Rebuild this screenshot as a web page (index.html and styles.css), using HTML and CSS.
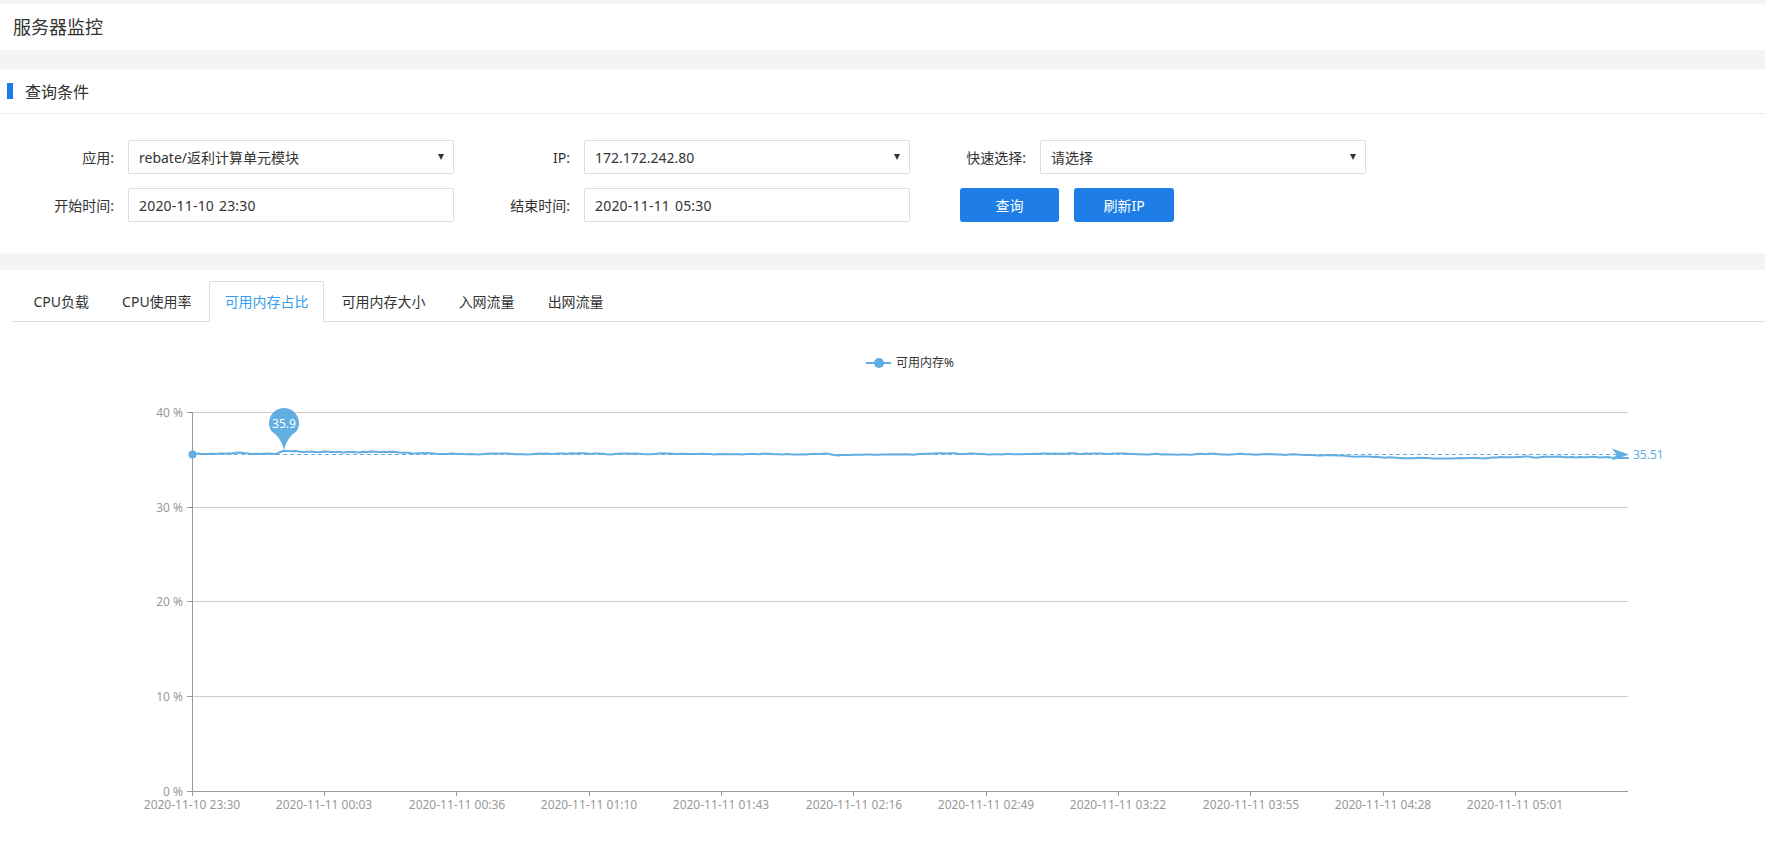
FILE: index.html
```html
<!DOCTYPE html>
<html lang="zh-CN">
<head>
<meta charset="utf-8">
<title>服务器监控</title>
<link rel="stylesheet" href="styles.css">
</head>
<body>
<header class="page-header">服务器监控</header>

<section class="panel query-panel">
  <div class="panel-title"><span class="title-bar"></span><span>查询条件</span></div>
  <div class="form">
    <div class="form-row">
      <div class="field"><label class="field-label">应用:</label><div class="select"><span>rebate/返利计算单元模块</span><i class="caret"></i></div></div>
      <div class="field"><label class="field-label">IP:</label><div class="select"><span>172.172.242.80</span><i class="caret"></i></div></div>
      <div class="field"><label class="field-label">快速选择:</label><div class="select"><span>请选择</span><i class="caret"></i></div></div>
    </div>
    <div class="form-row">
      <div class="field"><label class="field-label">开始时间:</label><div class="input">2020-11-10 23:30</div></div>
      <div class="field"><label class="field-label">结束时间:</label><div class="input">2020-11-11 05:30</div></div>
      <div class="field buttons"><button class="btn btn-query">查询</button><button class="btn btn-refresh">刷新IP</button></div>
    </div>
  </div>
</section>

<section class="panel chart-panel">
  <ul class="tabs">
    <li class="tab">CPU负载</li>
    <li class="tab">CPU使用率</li>
    <li class="tab active">可用内存占比</li>
    <li class="tab">可用内存大小</li>
    <li class="tab">入网流量</li>
    <li class="tab">出网流量</li>
  </ul>
  <svg class="chart" width="1765" height="527" viewBox="0 322 1765 527" xmlns="http://www.w3.org/2000/svg">
    <!-- legend -->
    <line class="legend-line" x1="866" y1="363" x2="891" y2="363"/>
    <circle class="legend-dot" cx="879" cy="363" r="5"/>
    <text class="legend-text" x="896" y="367">可用内存%</text>

    <!-- grid -->
    <line class="grid" x1="192" y1="412.5" x2="1628" y2="412.5"/>
    <line class="grid" x1="192" y1="507.5" x2="1628" y2="507.5"/>
    <line class="grid" x1="192" y1="601.5" x2="1628" y2="601.5"/>
    <line class="grid" x1="192" y1="696.5" x2="1628" y2="696.5"/>

    <!-- y axis -->
    <line class="axis" x1="192.5" y1="412" x2="192.5" y2="791"/>
    <line class="axis" x1="187" y1="412.5" x2="192" y2="412.5"/>
    <line class="axis" x1="187" y1="507.5" x2="192" y2="507.5"/>
    <line class="axis" x1="187" y1="601.5" x2="192" y2="601.5"/>
    <line class="axis" x1="187" y1="696.5" x2="192" y2="696.5"/>
    <line class="axis" x1="187" y1="791.5" x2="192" y2="791.5"/>
    <text class="tick-label y-label" x="183" y="416.5">40 %</text>
    <text class="tick-label y-label" x="183" y="511.5">30 %</text>
    <text class="tick-label y-label" x="183" y="605.5">20 %</text>
    <text class="tick-label y-label" x="183" y="700.5">10 %</text>
    <text class="tick-label y-label" x="183" y="795.5">0 %</text>

    <!-- x axis -->
    <line class="axis" x1="192" y1="791.5" x2="1628" y2="791.5"/>
    <g class="x-ticks">
      <line class="axis" x1="192.5" y1="791" x2="192.5" y2="796"/>
      <line class="axis" x1="324.5" y1="791" x2="324.5" y2="796"/>
      <line class="axis" x1="456.5" y1="791" x2="456.5" y2="796"/>
      <line class="axis" x1="589.5" y1="791" x2="589.5" y2="796"/>
      <line class="axis" x1="721.5" y1="791" x2="721.5" y2="796"/>
      <line class="axis" x1="853.5" y1="791" x2="853.5" y2="796"/>
      <line class="axis" x1="986.5" y1="791" x2="986.5" y2="796"/>
      <line class="axis" x1="1118.5" y1="791" x2="1118.5" y2="796"/>
      <line class="axis" x1="1250.5" y1="791" x2="1250.5" y2="796"/>
      <line class="axis" x1="1383.5" y1="791" x2="1383.5" y2="796"/>
      <line class="axis" x1="1515.5" y1="791" x2="1515.5" y2="796"/>
    </g>
    <text class="tick-label x-label" x="192" y="809">2020-11-10 23:30</text>
    <text class="tick-label x-label" x="324" y="809">2020-11-11 00:03</text>
    <text class="tick-label x-label" x="457" y="809">2020-11-11 00:36</text>
    <text class="tick-label x-label" x="589" y="809">2020-11-11 01:10</text>
    <text class="tick-label x-label" x="721" y="809">2020-11-11 01:43</text>
    <text class="tick-label x-label" x="854" y="809">2020-11-11 02:16</text>
    <text class="tick-label x-label" x="986" y="809">2020-11-11 02:49</text>
    <text class="tick-label x-label" x="1118" y="809">2020-11-11 03:22</text>
    <text class="tick-label x-label" x="1251" y="809">2020-11-11 03:55</text>
    <text class="tick-label x-label" x="1383" y="809">2020-11-11 04:28</text>
    <text class="tick-label x-label" x="1515" y="809">2020-11-11 05:01</text>

    <!-- series -->
    <polyline id="series" class="series" points=""/>

    <!-- average mark line -->
    <line class="avg-line" x1="192" y1="454.5" x2="1616" y2="454.5"/>
    <circle class="avg-dot" cx="192.5" cy="454.5" r="4"/>
    <path class="avg-arrow" d="M1629,454.5 L1612,448.5 L1616.5,454.5 L1612,460.5 Z"/>
    <text class="avg-label" x="1633" y="458.5">35.51</text>

    <!-- max mark point -->
    <path class="pin" d="M284,450 Q281.5,438 271.5,431.3 A15,15 0 1 1 296.5,431.3 Q286.5,438 284,450 Z"/>
    <text class="pin-label" x="284" y="427.5">35.9</text>
  </svg>
</section>
<script src="script.js"></script>
</body>
</html>
```

FILE: styles.css
```css
html, body {
  margin: 0;
  padding: 0;
}
body {
  background: #f4f4f4;
  padding-top: 4px;
  font-family: "Noto Sans", "Noto Sans CJK SC", sans-serif;
  color: #333;
  overflow: hidden;
}
.page-header {
  height: 46px;
  line-height: 46px;
  background: #fff;
  padding-left: 13px;
  font-size: 18px;
  color: #333;
}
.panel {
  background: #fff;
}
.query-panel {
  margin-top: 19px;
  height: 184px;
  box-sizing: border-box;
}
.panel-title {
  height: 45px;
  box-sizing: border-box;
  border-bottom: 1px solid #ececec;
  display: flex;
  align-items: center;
  gap: 12px;
  padding-left: 7px;
  font-size: 16px;
  color: #333;
}
.title-bar {
  width: 6px;
  height: 16px;
  background: #1e7be6;
}
.form {
  padding-top: 26px;
  display: flex;
  flex-direction: column;
  gap: 14px;
}
.form-row {
  display: flex;
  gap: 2px;
}
.field {
  width: 454px;
  display: flex;
  align-items: center;
  font-size: 14px;
}
.field-label {
  width: 128px;
  box-sizing: border-box;
  padding-right: 14px;
  text-align: right;
  color: #333;
  white-space: nowrap;
}
.select, .input {
  width: 326px;
  height: 34px;
  box-sizing: border-box;
  border: 1px solid #dedede;
  border-radius: 2px;
  display: flex;
  align-items: center;
  padding: 0 9px 0 10px;
  color: #333;
  white-space: nowrap;
}
.input {
  word-spacing: 1px;
  letter-spacing: 0.2px;
}
.select {
  justify-content: space-between;
}
.caret {
  width: 0;
  height: 0;
  border-left: 3px solid transparent;
  border-right: 3px solid transparent;
  border-top: 6px solid #333;
}
.buttons {
  padding-left: 48px;
  box-sizing: border-box;
  gap: 15px;
}
.btn {
  height: 34px;
  border: none;
  border-radius: 3px;
  background: #1e7de6;
  color: #fff;
  font-family: "Noto Sans", "Noto Sans CJK SC", sans-serif;
  font-size: 14px;
  padding: 0;
}
.btn-query { width: 99px; }
.btn-refresh { width: 100px; }

.chart-panel {
  margin-top: 17px;
  padding-top: 11px;
}
.tabs {
  list-style: none;
  margin: 0 0 0 12px;
  padding: 0 0 0 5px;
  display: flex;
  border-bottom: 1px solid #ddd;
}
.tab {
  height: 41px;
  box-sizing: border-box;
  line-height: 39px;
  padding: 0 14.5px;
  margin-bottom: -1px;
  margin-right: 2px;
  border: 1px solid transparent;
  border-radius: 2px 2px 0 0;
  font-size: 14px;
  color: #333;
  white-space: nowrap;
}
.tab:first-child {
  padding-left: 15.5px;
}
.tab.active {
  border-color: #ddd #ddd #fff;
  color: #34a0f0;
  background: #fff;
}
.chart {
  display: block;
  font-family: "Noto Sans", "Noto Sans CJK SC", sans-serif;
}
.grid {
  stroke: #ccc;
  stroke-width: 1;
}
.axis {
  stroke: #999;
  stroke-width: 1;
}
.tick-label {
  font-size: 12px;
  fill: #999;
}
.y-label { text-anchor: end; }
.x-label { text-anchor: middle; }
.legend-line {
  stroke: #62aee2;
  stroke-width: 2;
}
.legend-dot { fill: #62aee2; }
.legend-text {
  font-size: 12px;
  fill: #333;
}
.series {
  fill: none;
  stroke: #62aee2;
  stroke-width: 2;
  stroke-linejoin: round;
  stroke-linecap: round;
}
.avg-line {
  stroke: #62aee2;
  stroke-width: 1;
  stroke-dasharray: 4 3;
}
.avg-dot, .avg-arrow { fill: #62aee2; }
.avg-label {
  font-size: 12px;
  fill: #62aee2;
}
.pin { fill: #62aee2; }
.pin-label {
  font-size: 12px;
  fill: #fff;
  text-anchor: middle;
}
```

FILE: script.js
```js
(function () {
  var anchors = [
    [0, 35.62], [8, 35.60], [12, 35.70], [16, 35.60], [21, 35.62], [23, 35.90],
    [28, 35.80], [40, 35.78], [48, 35.80], [56, 35.70], [62, 35.58], [80, 35.56],
    [95, 35.62], [105, 35.58], [120, 35.62], [130, 35.60], [145, 35.55], [158, 35.60],
    [162, 35.45], [178, 35.48], [188, 35.62], [200, 35.56], [215, 35.60], [228, 35.64],
    [238, 35.58], [250, 35.52], [262, 35.55], [275, 35.50], [285, 35.42], [300, 35.20],
    [310, 35.12], [322, 35.15], [330, 35.28], [338, 35.22], [348, 35.25], [360, 35.20]
  ];
  var seed = 7;
  function rnd() {
    seed = (seed * 9301 + 49297) % 233280;
    return seed / 233280;
  }
  function base(t) {
    for (var i = 0; i < anchors.length - 1; i++) {
      var a = anchors[i], b = anchors[i + 1];
      if (t >= a[0] && t <= b[0]) {
        var f = (t - a[0]) / (b[0] - a[0]);
        f = (1 - Math.cos(f * Math.PI)) / 2;
        return a[1] + (b[1] - a[1]) * f;
      }
    }
    return anchors[anchors.length - 1][1];
  }
  var pts = [];
  var n = 0;
  for (var t = 0; t <= 360; t++) {
    n = n * 0.55 + (rnd() - 0.5) * 0.09;
    var v = base(t);
    if (Math.abs(t - 23) <= 1) { v = t === 23 ? 35.9 : v; }
    else { v += n; }
    var x = 192 + t * 1436 / 360;
    var y = 791 - v * 9.475;
    pts.push(x.toFixed(1) + ',' + y.toFixed(1));
  }
  document.getElementById('series').setAttribute('points', pts.join(' '));
})();
```
